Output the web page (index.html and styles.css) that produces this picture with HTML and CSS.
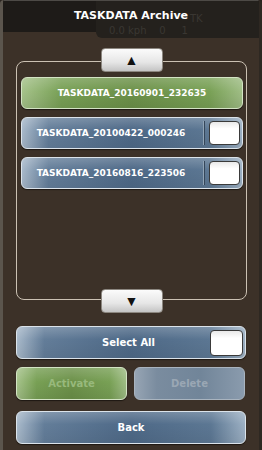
FILE: index.html
```html
<!DOCTYPE html>
<html lang="en">
<head>
  <meta charset="UTF-8">
  <title>TASKDATA Archive</title>
  <link rel="stylesheet" href="styles.css">
</head>
<body>
  <div class="window">
    <div class="header">
      <div class="ghost">
        <span class="ghost-tk">TK</span>
        <span class="ghost-row">0.0 kph&nbsp;&nbsp;&nbsp;&nbsp;0&nbsp;&nbsp;&nbsp;&nbsp;&nbsp;1</span>
      </div>
      <h1 class="title">TASKDATA Archive</h1>
    </div>

    <div class="content">
      <button class="arrow up">&#9650;</button>
      <div class="list">
        <div class="item green">TASKDATA_20160901_232635</div>
        <div class="item blue">
          <span class="label">TASKDATA_20100422_000246</span>
          <span class="check"></span>
        </div>
        <div class="item blue">
          <span class="label">TASKDATA_20160816_223506</span>
          <span class="check"></span>
        </div>
      </div>
      <button class="arrow down">&#9660;</button>

      <div class="btn blue select-all">
        <span class="label">Select All</span>
        <span class="check"></span>
      </div>
      <div class="pair">
        <div class="btn green disabled">Activate</div>
        <div class="btn grey disabled">Delete</div>
      </div>
      <div class="btn blue back">Back</div>
    </div>
  </div>
</body>
</html>
```

FILE: styles.css
```css
/* base */
body {
  margin: 0;
  width: 262px;
  height: 450px;
  overflow: hidden;
  background: #2a241f;
  font-family: "DejaVu Sans", Verdana, sans-serif;
}
.window {
  height: 450px;
  box-sizing: border-box;
  background: #3c3128;
  border-left: 3px solid #5b554d;
  border-right: 3px solid #2e2822;
  border-radius: 4px 4px 0 0;
  position: relative;
  overflow: hidden;
}
.header {
  height: 32px;
  background: #1e1b18;
  border-top: 1px solid #4d4a46;
  box-sizing: border-box;
  position: relative;
}
.ghost {
  position: absolute;
  left: 93px;
  right: -3px;
  top: 0;
  height: 37px;
  background: #24211d;
  border-radius: 0 0 0 6px;
  color: #3a3732;
  font-size: 10px;
}
.ghost-tk {
  position: absolute;
  left: 94px;
  top: 12px;
}
.ghost-row {
  position: absolute;
  left: 13px;
  top: 24px;
}
.title {
  position: relative;
  margin: 0;
  padding-top: 8px;
  text-align: center;
  color: #fff;
  font-size: 11px;
  font-weight: bold;
}

.content {
  display: flex;
  flex-direction: column;
  padding: 16px 0 0 13px;
  width: 231px;
}

/* scroll arrows */
.arrow {
  position: relative;
  z-index: 1;
  align-self: center;
  width: 62px;
  height: 24px;
  margin: 0;
  padding: 0;
  border: 1px solid #8c8780;
  border-radius: 4px;
  background: linear-gradient(#fbfbfb, #e6e6e6 60%, #c4c4c4);
  color: #111;
  font-size: 14px;
  line-height: 22px;
}
.arrow.up {
  margin-bottom: -11px;
}
.arrow.down {
  margin-top: -11px;
}

/* list frame */
.list {
  height: 239px;
  box-sizing: border-box;
  border: 1px solid #cbc1b3;
  border-radius: 8px;
  padding: 15px 3px 0 4px;
  display: flex;
  flex-direction: column;
  gap: 8px;
}
.item {
  height: 32px;
  box-sizing: border-box;
  border-radius: 6px;
  display: flex;
  align-items: center;
  color: #fff;
  font-size: 9px;
  font-weight: bold;
}
.item.green {
  justify-content: center;
}

/* shared button skins */
.green {
  border: 1px solid #d3e3c4;
  background:
    linear-gradient(rgba(255,255,255,0.18), rgba(255,255,255,0) 45%, rgba(0,0,0,0.08)),
    linear-gradient(90deg, #a5c28a, #78a055 18%, #6c9149 50%, #78a055 85%, #9fbd85);
  box-shadow: 0 1px 1px #1d1812;
}
.blue {
  border: 1px solid #dbe3ea;
  background:
    linear-gradient(rgba(255,255,255,0.2), rgba(255,255,255,0) 40%, rgba(0,0,0,0.06)),
    linear-gradient(90deg, #a8b9ca, #637d99 12%, #4e6987 50%, #5c7793 85%, #9cb0c3);
  box-shadow: 0 1px 1px #1d1812;
}
.grey {
  border: 1px solid #a9b4bf;
  background: linear-gradient(90deg, #97a5b4, #7a8c9f 20%, #718599 60%, #8a9bad);
}
.item .label {
  flex: 1;
  text-align: center;
  padding-right: 4px;
}
.item .check {
  align-self: stretch;
  margin: 3px 2px 3px 0;
  width: 36px;
  border-left: 1px solid #34465a;
  padding-left: 4px;
  box-shadow: -1px 0 0 #8fa3b6;
  position: relative;
}
.check {
  display: block;
  box-sizing: border-box;
}
.item .check::after,
.select-all .check {
  content: "";
  background: linear-gradient(#e9e9e9, #fff 30%);
  border: 1px solid #3a3a3a;
  border-radius: 4px;
}
.item .check::after {
  position: absolute;
  left: 4px;
  right: 0;
  top: 0;
  bottom: 0;
}

.btn {
  height: 33px;
  box-sizing: border-box;
  border-radius: 6px;
  display: flex;
  align-items: center;
  justify-content: center;
  color: #fff;
  font-size: 10px;
  font-weight: bold;
}
.select-all {
  margin-top: 13px;
  width: 230px;
  padding-right: 2px;
}
.select-all .label {
  flex: 1;
  text-align: center;
  padding-left: 30px;
}
.select-all .check {
  width: 33px;
  height: 26px;
}
.pair {
  margin-top: 8px;
  display: flex;
  gap: 7px;
  width: 230px;
}
.pair .btn {
  width: 111px;
}
.btn.green.disabled {
  color: #98b97c;
}
.btn.grey.disabled {
  color: #9aa7b4;
}
.back {
  margin-top: 11px;
  width: 230px;
}
```
